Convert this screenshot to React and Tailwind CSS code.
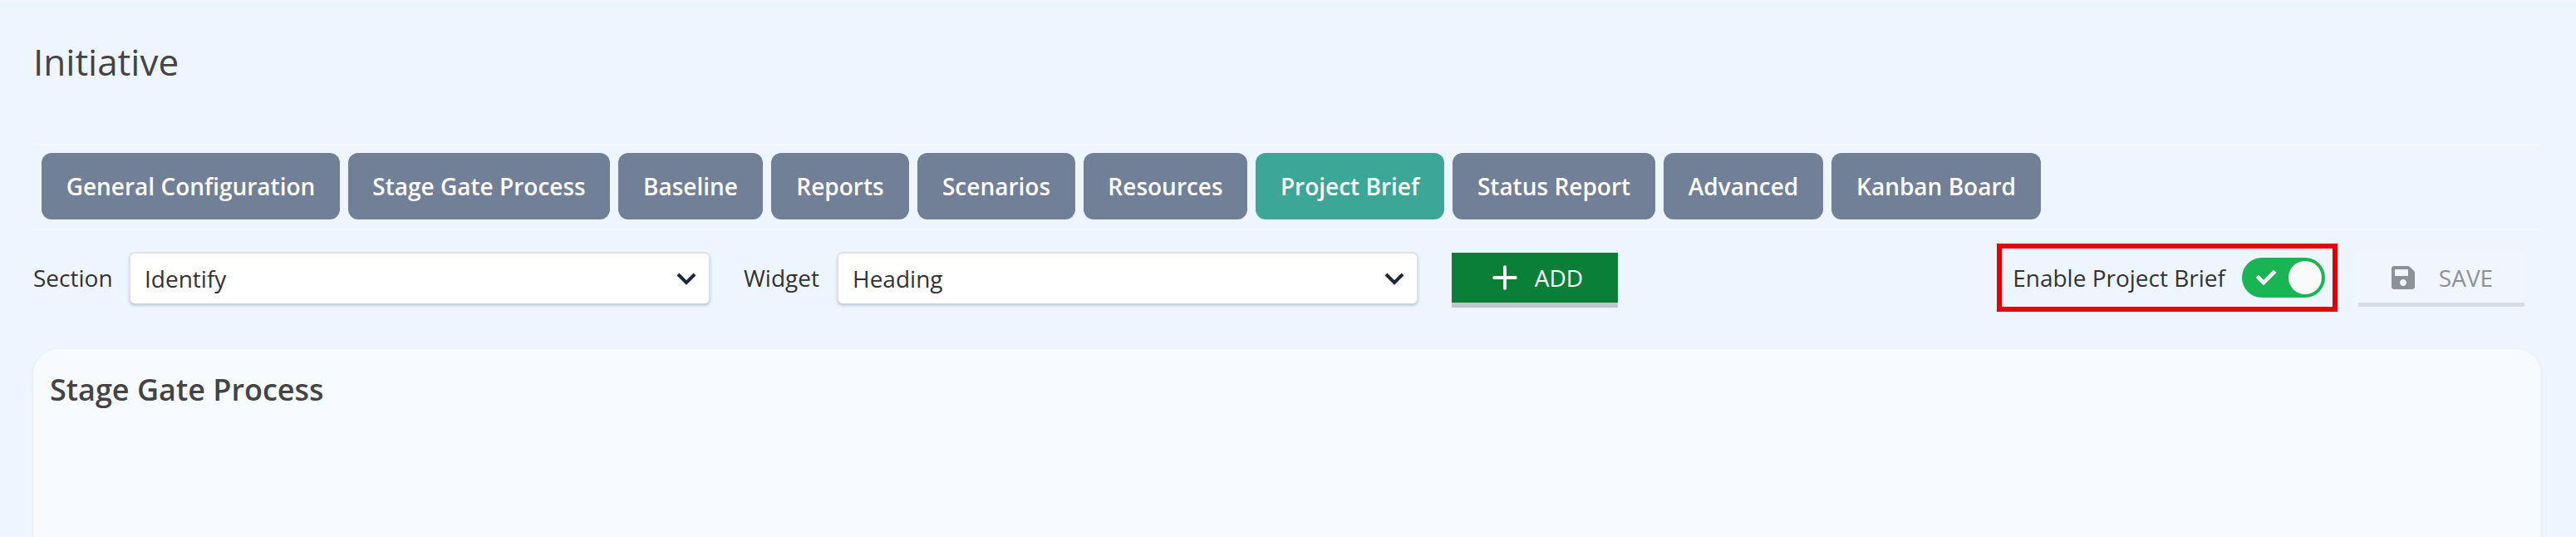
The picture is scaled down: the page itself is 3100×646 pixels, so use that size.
import React from "react";
import { Plus } from "lucide-react";
import { FaSave, FaCheck } from "react-icons/fa";

const tabs = [
  ["General Configuration", "w-[359px]"],
  ["Stage Gate Process", "w-[315px]"],
  ["Baseline", "w-[174px]"],
  ["Reports", "w-[166px]"],
  ["Scenarios", "w-[190px]"],
  ["Resources", "w-[197px]"],
  ["Project Brief", "w-[227px]"],
  ["Status Report", "w-[244px]"],
  ["Advanced", "w-[192px]"],
  ["Kanban Board", "w-[252px]"],
];

function Chevron() {
  return (
    <svg width="26" height="16" viewBox="0 0 26 16" fill="none" className="shrink-0">
      <path d="M3 3 L13 13 L23 3" stroke="#1f2733" strokeWidth="4" />
    </svg>
  );
}

function Select({ value }) {
  return (
    <div className="flex h-[62px] w-[700px] shrink-0 items-center justify-between rounded-[7px] border-2 border-[#dfe3e8] border-b-0 bg-white pl-[17px] pr-[14px] shadow-[0_3px_3px_rgba(120,135,160,0.35)]">
      <span className="text-[28px] text-[#333333]">{value}</span>
      <Chevron />
    </div>
  );
}

export default function App() {
  return (
    <div className="flex h-[646px] flex-col overflow-hidden border-t-2 border-[#f3f7fe] bg-[#edf5ff] pl-[40px] pr-[42px] font-['Open_Sans',sans-serif]">
      <h1 className="mt-[37px] h-[70px] text-[44px] leading-[70px] font-normal text-[#444444]">Initiative</h1>
      <div className="mt-[64px] flex h-[104px] gap-[10px] border-y-2 border-[#f5f8fe] pl-[10px] pt-[9px]">
        {tabs.map(([t, w]) => (
          <div
            key={t}
            className={`flex h-[80px] items-center justify-center rounded-[12px] text-[28px] font-semibold text-white ${w} ${t === "Project Brief" ? "bg-[#3da797]" : "bg-[#718096]"}`}
          >
            {t}
          </div>
        ))}
      </div>
      <div className="mt-[15px] flex h-[84px] items-center">
        <span className="w-[115px] shrink-0 text-[28px] text-[#333333]">Section</span>
        <Select value="Identify" />
        <span className="ml-[40px] w-[112px] shrink-0 text-[28px] text-[#333333]">Widget</span>
        <Select value="Heading" />
        <button className="mt-[6px] ml-[40px] flex h-[66px] w-[200px] items-center justify-center gap-[14px] border-b-[6px] border-[#bcc5d1] bg-[#0a7f37] text-[28px] text-white">
          <Plus size={44} strokeWidth={2.1} />
          ADD
        </button>
        <div className="ml-auto flex h-[82px] items-center border-[6px] border-[#e60000] pl-[13px] pr-[9px]">
          <span className="text-[28px] text-[#333333]">Enable Project Brief</span>
          <div className="ml-[20px] flex h-[48px] w-[100px] items-center justify-between rounded-full bg-[#1ab553] pl-[17px] pr-[4px]">
            <FaCheck size={24} color="#ffffff" />
            <div className="h-[40px] w-[40px] rounded-full bg-[#fafafa]" />
          </div>
        </div>
        <button className="mt-[5px] ml-[25px] mr-[20px] flex h-[65px] w-[200px] items-center justify-center gap-[27px] border-b-[5px] border-[#d5dce6] bg-[#f1f5fd] text-[28px] text-[#8a919c]">
          <FaSave size={32} color="#8a919c" />
          SAVE
        </button>
      </div>
      <div className="mt-[44px] flex-1 rounded-t-[30px] bg-[#f7faff] px-[20px] pt-[27px] shadow-[0_1px_3px_rgba(170,185,210,0.3)]">
        <h2 className="text-[36px] leading-[44px] font-semibold text-[#444444]">Stage Gate Process</h2>
      </div>
    </div>
  );
}
